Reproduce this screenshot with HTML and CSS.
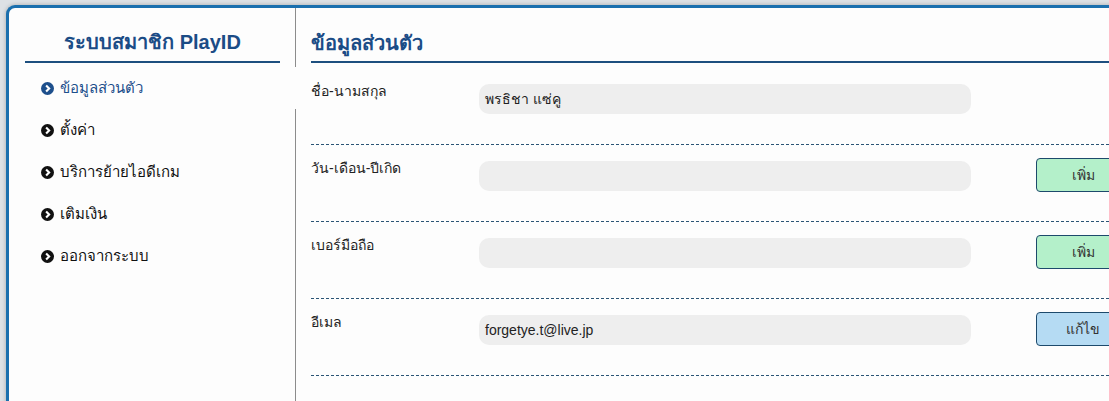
FILE: index.html
```html
<!DOCTYPE html>
<html lang="th">
<head>
<meta charset="utf-8">
<title>ระบบสมาชิก PlayID</title>
<link rel="stylesheet" href="styles.css">
</head>
<body>
<div class="page">
  <div class="card">
    <aside class="sidebar">
      <h2 class="side-title">ระบบสมาชิก PlayID</h2>
      <ul class="menu">
        <li class="menu-item active"><svg class="ico" viewBox="0 0 16 16"><circle cx="8" cy="8" r="8" fill="currentColor"/><polyline points="6.3,4.3 10,8 6.3,11.7" fill="none" stroke="#fff" stroke-width="2.6"/></svg><span>ข้อมูลส่วนตัว</span></li>
        <li class="menu-item"><svg class="ico" viewBox="0 0 16 16"><circle cx="8" cy="8" r="8" fill="currentColor"/><polyline points="6.3,4.3 10,8 6.3,11.7" fill="none" stroke="#fff" stroke-width="2.6"/></svg><span>ตั้งค่า</span></li>
        <li class="menu-item"><svg class="ico" viewBox="0 0 16 16"><circle cx="8" cy="8" r="8" fill="currentColor"/><polyline points="6.3,4.3 10,8 6.3,11.7" fill="none" stroke="#fff" stroke-width="2.6"/></svg><span>บริการย้ายไอดีเกม</span></li>
        <li class="menu-item"><svg class="ico" viewBox="0 0 16 16"><circle cx="8" cy="8" r="8" fill="currentColor"/><polyline points="6.3,4.3 10,8 6.3,11.7" fill="none" stroke="#fff" stroke-width="2.6"/></svg><span>เติมเงิน</span></li>
        <li class="menu-item"><svg class="ico" viewBox="0 0 16 16"><circle cx="8" cy="8" r="8" fill="currentColor"/><polyline points="6.3,4.3 10,8 6.3,11.7" fill="none" stroke="#fff" stroke-width="2.6"/></svg><span>ออกจากระบบ</span></li>
      </ul>
    </aside>
    <main class="main">
      <h1 class="main-title">ข้อมูลส่วนตัว</h1>
      <div class="row">
        <div class="label">ชื่อ-นามสกุล</div>
        <div class="field">พรธิชา แซ่คู</div>
      </div>
      <div class="row">
        <div class="label">วัน-เดือน-ปีเกิด</div>
        <div class="field"></div>
        <button class="btn btn-add">เพิ่ม</button>
      </div>
      <div class="row">
        <div class="label">เบอร์มือถือ</div>
        <div class="field"></div>
        <button class="btn btn-add">เพิ่ม</button>
      </div>
      <div class="row">
        <div class="label">อีเมล</div>
        <div class="field">forgetye.t@live.jp</div>
        <button class="btn btn-edit">แก้ไข</button>
      </div>
    </main>
  </div>
</div>
</body>
</html>
```

FILE: styles.css
```css
html, body {
  margin: 0;
  padding: 0;
  overflow: hidden;
  background: #dde1e5;
  font-family: "Liberation Sans", Arial, sans-serif;
}

.page {
  padding: 5px 0 0 6px;
  height: 396px;
  overflow: hidden;
}

.card {
  display: flex;
  width: 1180px;
  min-height: 420px;
  background: #fdfdfd;
  border-top: 3px solid #1a6fae;
  border-left: 3px solid #1a6fae;
  border-radius: 9px 0 0 0;
  box-shadow: 0 0 4px rgba(0, 0, 0, 0.25);
}

.sidebar {
  width: 286px;
  flex: none;
  border-right: 1px solid #8c8c8c;
}

.side-title {
  margin: 22px 15px 0 16px;
  padding-bottom: 7px;
  border-bottom: 2px solid #1d4f7f;
  font-size: 20px;
  line-height: 24px;
  font-weight: bold;
  color: #1b4c86;
  text-align: center;
}

.menu {
  list-style: none;
  margin: 4px 0 0;
  padding: 0;
}

.menu-item {
  display: flex;
  align-items: center;
  gap: 6px;
  height: 42px;
  padding-left: 32px;
  font-size: 15px;
  color: #111;
}

.menu-item.active {
  color: #1d4f8c;
  background: #fdfdfd;
  margin-right: -1px;
  position: relative;
}

.ico {
  width: 13px;
  height: 13px;
  flex: none;
}

.main {
  flex: 1;
  padding-left: 15px;
}

.main-title {
  margin: 22px 0 5px;
  padding-bottom: 5px;
  border-bottom: 2px solid #1d4f7f;
  font-size: 20px;
  line-height: 26px;
  font-weight: bold;
  color: #1b4c86;
}

.row {
  display: flex;
  align-items: flex-start;
  min-height: 34px;
  padding: 13px 0 29px;
  border-bottom: 1px dashed #2a5475;
}

.label {
  width: 168px;
  flex: none;
  font-size: 14px;
  line-height: 20px;
  color: #222;
}

.field {
  width: 486px;
  height: 30px;
  margin-top: 3px;
  padding-left: 6px;
  flex: none;
  background: #eeeeee;
  border-radius: 10px;
  font-size: 14px;
  line-height: 30px;
  color: #222;
}

.btn {
  width: 94px;
  height: 34px;
  margin-left: 65px;
  flex: none;
  border: 1px solid #1d4a6c;
  border-radius: 4px;
  font-family: inherit;
  font-size: 14px;
  color: #333;
  padding: 0;
}

.btn-add {
  background: #b4f0ca;
}

.btn-edit {
  background: #b5dbf3;
}
```
